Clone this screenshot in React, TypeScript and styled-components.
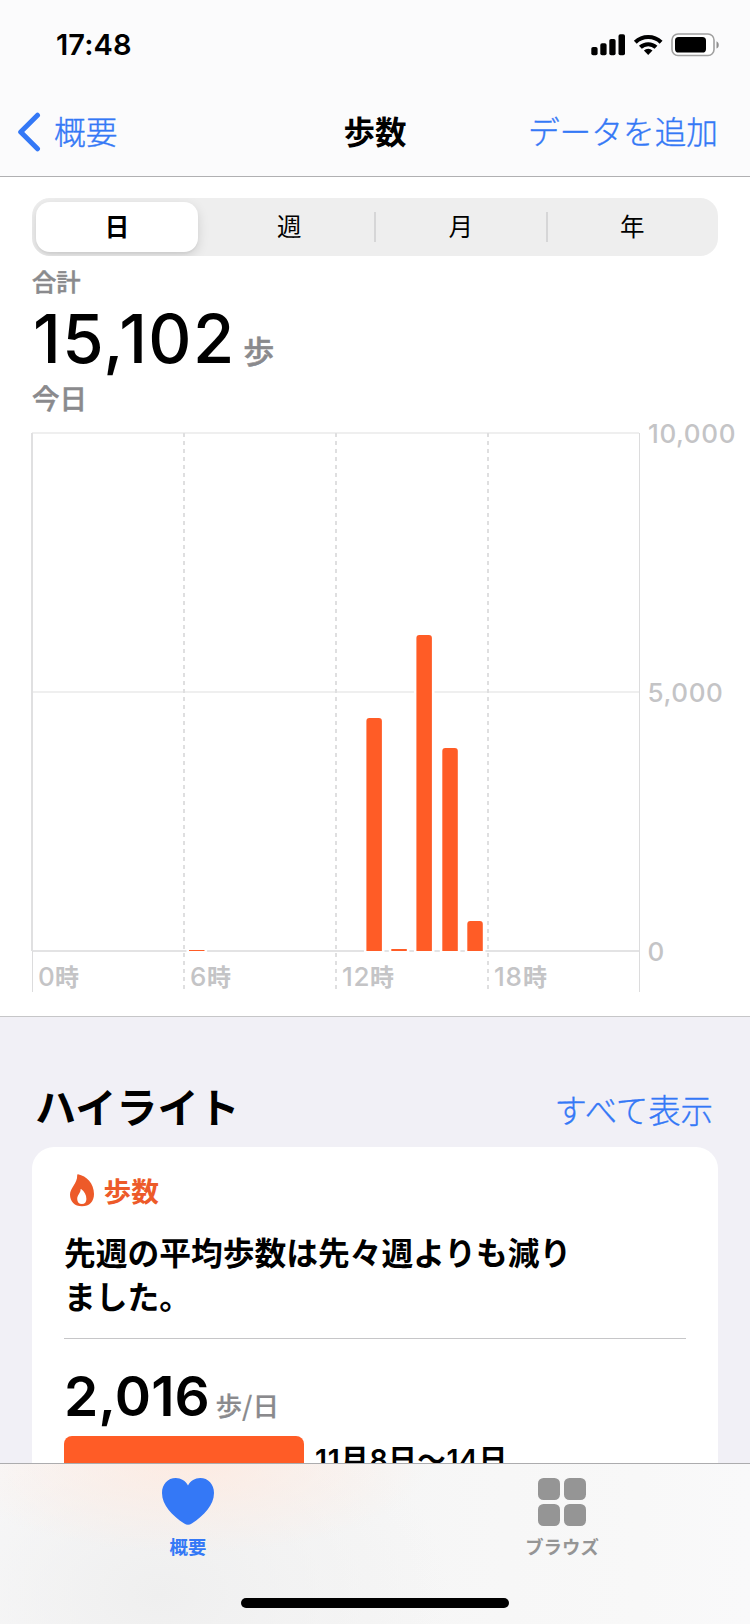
import React from 'react';
import styled, { createGlobalStyle } from 'styled-components';

const JP = '"Noto Sans CJK JP", sans-serif';
const LATIN = 'Inter, "Noto Sans CJK JP", sans-serif';
const BLUE = '#3478f6';
const ORANGE = '#ff5c26';

const GlobalStyle = createGlobalStyle`
  * { box-sizing: border-box; }
  body { margin: 0; background: #fff; -webkit-font-smoothing: antialiased; }
`;

const Screen = styled.div`
  width: 750px;
  height: 1624px;
  display: flex;
  flex-direction: column;
  overflow: hidden;
  background: #f1f0f6;
  color: #000;
  font-family: ${JP};
`;

const Header = styled.header`
  flex: none;
  height: 177px;
  background: #fbfbfc;
  border-bottom: 1px solid #b0b0b2;
`;

const StatusBar = styled.div`
  height: 88px;
  padding: 28px 31px 0 56px;
  display: flex;
  justify-content: space-between;
  align-items: flex-start;
`;

const Clock = styled.span`
  font: 600 29px/34px ${LATIN};
  letter-spacing: 0.1px;
`;

const NavBar = styled.nav`
  height: 88px;
  padding: 0 32px 0 18px;
  display: grid;
  grid-template-columns: 1fr auto 1fr;
  align-items: center;
`;

const NavTitle = styled.h1`
  margin: 0 0 4px;
  font: 700 31.5px/40px ${JP};
  transform: translateX(7px);
`;

const LinkText = styled.a<{ $end?: boolean; $drop?: number; $size?: number }>`
  display: flex;
  align-items: center;
  gap: 13px;
  justify-self: ${(p) => (p.$end ? 'end' : 'start')};
  margin-top: ${(p) => p.$drop ?? 0}px;
  color: ${BLUE};
  font: 300 ${(p) => p.$size ?? 31.7}px/40px ${JP};
  -webkit-text-stroke: 0.35px ${BLUE};
`;

const LinkLabel = styled.span`
  margin-bottom: 4px;
`;

const Content = styled.main`
  flex: 1;
  min-height: 0;
  overflow: hidden;
`;

const Summary = styled.section`
  background: #fff;
  padding-top: 21px;
  border-bottom: 1px solid #c6c6c8;
`;

const Segmented = styled.div`
  height: 58px;
  margin: 0 32px;
  display: grid;
  grid-template-columns: repeat(4, 1fr);
  grid-template-rows: 58px;
  overflow: hidden;
  border-radius: 18px;
  background: #eeeeee;
`;

const Segment = styled.button<{ $active?: boolean; $divided?: boolean }>`
  display: flex;
  align-items: center;
  justify-content: center;
  border: 0;
  margin: ${(p) => (p.$active ? '4px 5.5px 4px 4px' : '14px 1px 14px -1px')};
  padding: 0 0 3px ${(p) => (p.$active ? 0 : 2)}px;
  border-radius: ${(p) => (p.$active ? '14px' : '0')};
  background: ${(p) => (p.$active ? '#fff' : 'transparent')};
  box-shadow: ${(p) =>
    p.$active ? '0 4px 12px rgba(0,0,0,.13), 0 2px 2px rgba(0,0,0,.04)' : p.$divided ? 'inset 2px 0 #d6d6d7' : 'none'};
  color: #000;
  font: ${(p) => (p.$active ? 700 : 400)} 24.5px/24px ${JP};
`;

const Caption = styled.div<{ $size: number; $line: number; $top: number }>`
  margin: ${(p) => p.$top}px 32px 0;
  color: #8a8a8d;
  font: 500 ${(p) => p.$size}px/${(p) => p.$line}px ${JP};
  -webkit-text-stroke: 0.5px #8a8a8d;
`;

const Amount = styled.div<{ $line: number; $gap: number }>`
  display: flex;
  align-items: baseline;
  gap: ${(p) => p.$gap}px;
  height: ${(p) => p.$line}px;
  line-height: ${(p) => p.$line}px;
`;

const Figure = styled.span<{ $size: number; $weight: number; $spacing: number }>`
  font-family: ${LATIN};
  font-size: ${(p) => p.$size}px;
  font-weight: ${(p) => p.$weight};
  letter-spacing: ${(p) => p.$spacing}px;
`;

const TotalRow = styled.div`
  margin: 7px 33px 0;
`;

const Unit = styled.span<{ $size: number; $outline?: number }>`
  color: #8a8a8d;
  font: 500 ${(p) => p.$size}px/40px ${JP};
  -webkit-text-stroke: ${(p) => p.$outline ?? 0.5}px #8a8a8d;
`;

const Chart = styled.svg`
  display: block;
  margin-top: -2px;
  font: 500 26px ${LATIN};
`;

const AxisLabels = styled.g`
  fill: #c4c4c6;
  letter-spacing: 0.6px;
`;

const HourMark = styled.text`
  font: 700 24px ${JP};
`;

const SectionHead = styled.div`
  height: 113px;
  padding: 63px 37px 0 35px;
  display: flex;
  justify-content: space-between;
  align-items: flex-start;
`;

const SectionTitle = styled.h2`
  margin: 0;
  font: 700 41.1px/50px ${JP};
`;

const Card = styled.article`
  margin: 17px 32px 0;
  padding: 26px 32px 0;
  height: 500px;
  border-radius: 22px;
  background: #fff;
`;

const CardLabel = styled.div`
  display: flex;
  align-items: center;
  gap: 8.5px;
  height: 34px;
  padding-left: 6px;
  color: #ed5a29;
  font: 700 27.7px/34px ${JP};
`;

const CardText = styled.p`
  margin: 22px 0 21px;
  font: 700 31.75px/44px ${JP};
`;

const Divider = styled.hr`
  margin: 0 0 27px;
  border: 0;
  height: 1px;
  background: #c6c6c8;
`;

const Comparison = styled.div`
  display: flex;
  align-items: flex-start;
  gap: 11px;
  margin-top: 10px;
`;

const AverageBar = styled.div`
  width: 240px;
  height: 64px;
  border-radius: 8px;
  background: ${ORANGE};
`;

const Period = styled.span`
  padding-top: 4px;
  font: 600 28.5px/40px ${LATIN};
  letter-spacing: 0.6px;
`;

const TabBar = styled.footer`
  flex: none;
  height: 161px;
  border-top: 1px solid #acacae;
  background:
    radial-gradient(ellipse 240px 90px at 190px 0, rgba(255, 233, 222, .8), rgba(255, 233, 222, 0)),
    radial-gradient(ellipse 290px 200px at 160px 130px, #efefef, rgba(247, 247, 247, 0)),
    linear-gradient(90deg, #f9f9fa, #f6f6f6 50%, #f8f8f8 85%, #f9f9fa);
`;

const Tabs = styled.div`
  display: grid;
  grid-template-columns: 376px 372px;
  height: 134px;
  padding-top: 14px;
`;

const Tab = styled.a<{ $active?: boolean }>`
  display: flex;
  flex-direction: column;
  align-items: center;
  gap: 9px;
  color: ${(p) => (p.$active ? BLUE : '#959595')};
  font: 700 18.4px/22px ${JP};
`;

const HomeIndicator = styled.div`
  width: 268px;
  height: 10px;
  margin: 0 auto;
  border-radius: 5px;
  background: #000;
`;

const StatusIconsSvg = styled.svg`
  margin-top: 5px;
`;

const StatusIcons = () => (
  <StatusIconsSvg width="129" height="24" viewBox="590 33 129 24">
    <rect x="591.3" y="47" width="6.3" height="8.3" rx="1.8" />
    <rect x="600.3" y="43.2" width="6.3" height="12.1" rx="1.8" />
    <rect x="609.3" y="39" width="6.3" height="16.3" rx="1.8" />
    <rect x="618.5" y="34.3" width="6.5" height="21" rx="1.8" />
    <g fill="none" stroke="#000" strokeWidth="4.1">
      <path d="M635.3 42.2a18.5 18.5 0 0 1 25.8 0" />
      <path d="M640.4 47.3a11.3 11.3 0 0 1 15.6 0" />
    </g>
    <path d="M648.2 54.9l-4.3-4.3a6.2 6.2 0 0 1 8.6 0z" />
    <rect x="672" y="34" width="42" height="21.5" rx="6" fill="#fff" stroke="#a0a0a0" strokeWidth="1.6" />
    <rect x="675" y="37" width="31" height="15.5" rx="3.6" />
    <path d="M716.5 41.2c3 1.3 3 6.1 0 7.4z" fill="#8f8f8f" />
  </StatusIconsSvg>
);

const BackIcon = () => (
  <svg width="23" height="40" viewBox="0 0 23 40">
    <path d="M19.5 3.2L2.7 20l16.8 16.8" fill="none" stroke={BLUE} strokeWidth="5" strokeLinecap="round" strokeLinejoin="round" />
  </svg>
);

const FlameIcon = () => (
  <svg width="25" height="33" viewBox="0 0 25 33">
    <path
      fillRule="evenodd"
      fill="#ed5a29"
      d="M8 .3C16.500 2 24 9.500 24 20C24 27.500 19.500 32.300 12 32.300S0 27.500 0 20.500C0 14 7.500 9.500 7.200 1.200Q7.200.2 8 .3ZM10.600 15.200C10.800 19 7.200 20.500 7.200 25C7.200 28 9 30 11.900 30S16.400 28 16.400 25C16.400 21 14.500 17.500 11.100 15Q10.600 14.700 10.600 15.200Z"
    />
  </svg>
);

const HeartIcon = () => (
  <svg width="52" height="48" viewBox="0 0 52 48">
    <path
      fill={BLUE}
      d="M26 7.500C23.500 2.800 19 0 13.800 0C5.800 0 0 6.300 0 15C0 27 10 37.500 22.200 45.500Q26 48 29.800 45.500C42 37.500 52 27 52 15C52 6.300 46.200 0 38.200 0C33 0 28.500 2.800 26 7.500Z"
    />
  </svg>
);

const BrowseIcon = () => (
  <svg width="48" height="48" viewBox="0 0 48 48" fill="#959595">
    <rect width="22" height="22" rx="5.500" />
    <rect x="26" width="22" height="22" rx="5.500" />
    <rect y="26" width="22" height="22" rx="5.500" />
    <rect x="26" y="26" width="22" height="22" rx="5.500" />
  </svg>
);

const bars = [
  { x: 189, top: 950 },
  { x: 366.4, top: 718 },
  { x: 391.3, top: 949 },
  { x: 416.4, top: 635 },
  { x: 442.300, top: 748 },
  { x: 467.300, top: 921 },
];

const hours = [
  { x: 38, digits: '0', end: 55 },
  { x: 190, digits: '6', end: 207 },
  { x: 342, digits: '12', end: 370 },
  { x: 494, digits: '18', end: 523 },
];

const StepChart = () => (
  <Chart width="750" height="604" viewBox="0 412 750 604">
    <g fill="#efefef">
      <rect x="32" y="432" width="607" height="2" />
      <rect x="32" y="691" width="607" height="2" />
    </g>
    <rect x="32" y="950" width="607" height="2" fill="#e3e3e4" />
    <rect x="31" y="433" width="2" height="518" fill="#e0e0e1" />
    <rect x="32" y="951" width="1" height="41" fill="#dcdcdd" />
    <rect x="639" y="433" width="1" height="559" fill="#dcdcdd" />
    <g stroke="#dfdfe0" strokeWidth="2" strokeDasharray="4 4">
      <path d="M184 433V989" />
      <path d="M336 433V989" />
      <path d="M488 433V989" />
    </g>
    {bars.map((b) => (
      <g key={b.x}>
        <rect x={b.x - 2.5} y={b.top - 2} width="20.600" height={954 - b.top} fill="#fff" />
        <path
          fill={ORANGE}
          d={
            b.top > 940
              ? `M${b.x} 951V${b.top}h15.500V951Z`
              : `M${b.x} 951V${b.top + 3}q0-3 3-3h9.500q3 0 3 3V951Z`
          }
        />
      </g>
    ))}
    <AxisLabels>
      <text x="648" y="443.300">10,000</text>
      <text x="647.500" y="702.300">5,000</text>
      <text x="647.500" y="961.300">0</text>
      {hours.map((h) => (
        <React.Fragment key={h.digits}>
          <text x={h.x} y="986.300">{h.digits}</text>
          <HourMark x={h.end} y="986.300">時</HourMark>
        </React.Fragment>
      ))}
    </AxisLabels>
  </Chart>
);

export default function App() {
  return (
    <Screen>
      <GlobalStyle />
      <Header>
        <StatusBar>
          <Clock>17:48</Clock>
          <StatusIcons />
        </StatusBar>
        <NavBar>
          <LinkText>
            <BackIcon />
            <LinkLabel>概要</LinkLabel>
          </LinkText>
          <NavTitle>歩数</NavTitle>
          <LinkText $end>
            <LinkLabel>データを追加</LinkLabel>
          </LinkText>
        </NavBar>
      </Header>
      <Content>
        <Summary>
          <Segmented>
            <Segment $active>日</Segment>
            <Segment>週</Segment>
            <Segment $divided>月</Segment>
            <Segment $divided>年</Segment>
          </Segmented>
          <Caption $size={24.3} $line={30} $top={10}>合計</Caption>
          <TotalRow>
            <Amount $line={72} $gap={7.5}>
              <Figure $size={67} $weight={500} $spacing={1.4}>15,102</Figure>
              <Unit $size={31}>歩</Unit>
            </Amount>
          </TotalRow>
          <Caption $size={27.5} $line={34} $top={5}>今日</Caption>
          <StepChart />
        </Summary>
        <SectionHead>
          <SectionTitle>ハイライト</SectionTitle>
          <LinkText $drop={9} $size={32.4}>すべて表示</LinkText>
        </SectionHead>
        <Card>
          <CardLabel>
            <FlameIcon />
            歩数
          </CardLabel>
          <CardText>
            先週の平均歩数は先々週よりも減り
            <br />
            ました。
          </CardText>
          <Divider />
          <Amount $line={60} $gap={5.5}>
            <Figure $size={55} $weight={600} $spacing={0.2}>2,016</Figure>
            <Unit $size={26.6} $outline={0.2}>歩/日</Unit>
          </Amount>
          <Comparison>
            <AverageBar />
            <Period>11月8日〜14日</Period>
          </Comparison>
        </Card>
      </Content>
      <TabBar>
        <Tabs>
          <Tab $active>
            <HeartIcon />
            概要
          </Tab>
          <Tab>
            <BrowseIcon />
            ブラウズ
          </Tab>
        </Tabs>
        <HomeIndicator />
      </TabBar>
    </Screen>
  );
}
